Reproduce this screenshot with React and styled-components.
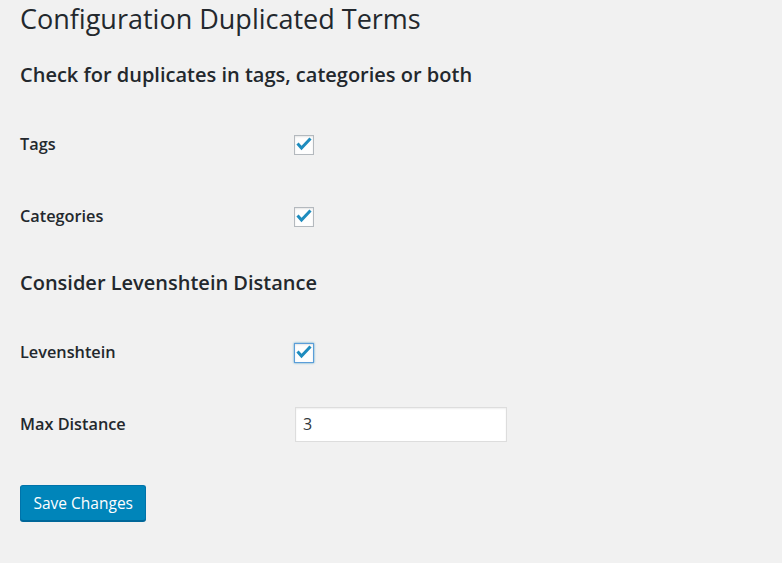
import React from 'react';
import styled, { createGlobalStyle } from 'styled-components';

const GlobalStyle = createGlobalStyle`
  html, body {
    margin: 0;
    padding: 0;
    background: #f1f1f1;
  }
  body {
    font-family: "Open Sans", "Noto Sans", sans-serif;
    color: #23282d;
  }
`;

const Wrap = styled.div`
  padding: 0 20px;
  width: 742px;
  height: 563px;
`;

const Title = styled.h1`
  margin: 0;
  padding-top: 1px;
  font-size: 27px;
  font-weight: 400;
  line-height: 36px;
  color: #23282d;
`;

const SectionTitle = styled.h2`
  margin: ${p => (p.first ? '25px 0 20px' : '18px 0 20px')};
  font-size: 20px;
  font-weight: 600;
  line-height: 26px;
  color: #23282d;
`;

const Row = styled.div`
  display: grid;
  grid-template-columns: 274px 1fr;
  align-items: center;
  height: 72px;
`;

const Label = styled.label`
  font-size: 16.3px;
  font-weight: 600;
  color: #23282d;
`;

const Field = styled.div`
  display: flex;
  align-items: center;
  padding-top: ${p => (p.shift ? '2px' : '0')};
  padding-left: ${p => (p.indent ? '1px' : '0')};
`;

const Box = styled.span`
  display: inline-flex;
  align-items: center;
  justify-content: center;
  width: 18px;
  height: 18px;
  border: 1px solid ${p => (p.focused ? '#5b9dd9' : '#b4b9be')};
  background: #fefefe;
  box-shadow: ${p =>
    p.focused
      ? '0 0 2px rgba(30, 140, 190, 0.8), inset 0 1px 2px rgba(0, 0, 0, 0.1)'
      : 'inset 0 1px 2px rgba(0, 0, 0, 0.1)'};
`;

const Input = styled.input`
  box-sizing: border-box;
  width: 212px;
  height: 35px;
  margin: 0;
  padding: 0 7px;
  border: 1px solid #ddd;
  background: #fff;
  box-shadow: inset 0 1px 2px rgba(0, 0, 0, 0.07);
  font-family: "Open Sans", "Noto Sans", sans-serif;
  font-size: 16px;
  color: #32373c;
  outline: none;
`;

const Button = styled.button`
  margin-top: 25px;
  height: 36px;
  padding: 0 12.5px;
  border: 1px solid #0073aa;
  border-bottom-color: #006799;
  border-radius: 3px;
  background: #0085ba;
  box-shadow: 0 1px 0 #006799;
  color: #fff;
  font-family: "Open Sans", "Noto Sans", sans-serif;
  font-size: 15.5px;
  cursor: pointer;
`;

const Check = ({ focused }) => (
  <Box focused={focused}>
    <svg width="18" height="18" viewBox="0 0 18 18">
      <path d="M2.5 7.5 L6.5 12 L15.5 2.5" fill="none" stroke="#1e8cbe" strokeWidth="3" strokeLinejoin="miter" />
    </svg>
  </Box>
);

const App = () => (
  <>
    <GlobalStyle />
    <Wrap>
      <Title>Configuration Duplicated Terms</Title>
      <SectionTitle first>Check for duplicates in tags, categories or both</SectionTitle>
      <Row>
        <Label>Tags</Label>
        <Field shift><Check /></Field>
      </Row>
      <Row>
        <Label>Categories</Label>
        <Field shift><Check /></Field>
      </Row>
      <SectionTitle>Consider Levenshtein Distance</SectionTitle>
      <Row>
        <Label>Levenshtein</Label>
        <Field shift><Check focused /></Field>
      </Row>
      <Row>
        <Label>Max Distance</Label>
        <Field indent><Input defaultValue="3" /></Field>
      </Row>
      <Button>Save Changes</Button>
    </Wrap>
  </>
);

export default App;
